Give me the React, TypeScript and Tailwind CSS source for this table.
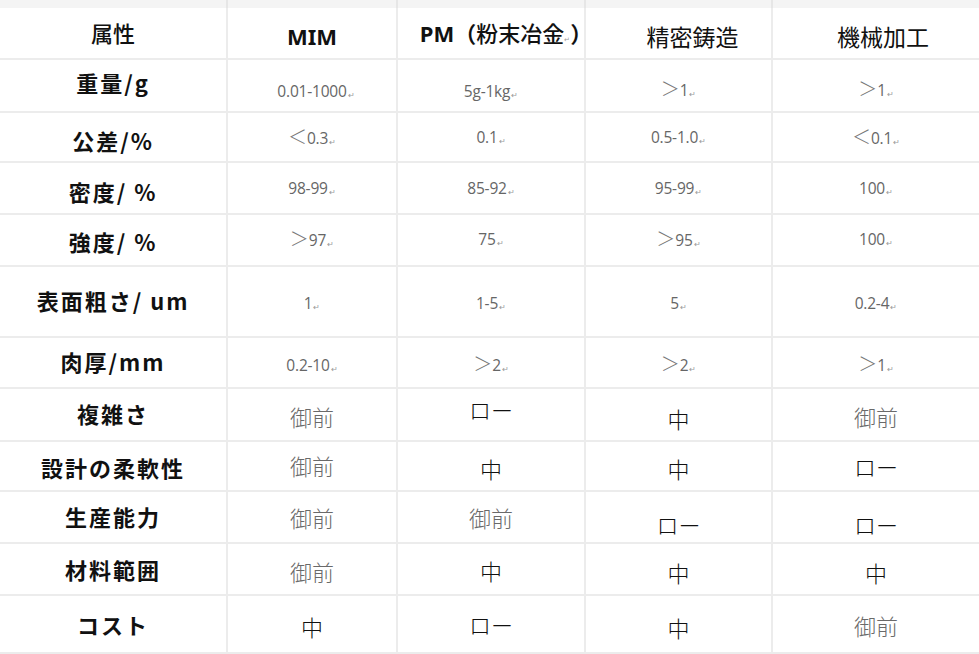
import React from "react";

type Cell = { t: string; k: "num" | "jp"; pre?: "gt" | "lt"; c?: string; gray?: boolean };

const JP = { fontFamily: '"Noto Sans CJK JP", "Noto Sans", sans-serif' };
const NUM = { fontFamily: '"Open Sans", "Noto Sans", sans-serif' };

const rows: { label: string; lc: string; h: string; cells: Cell[] }[] = [
  {
    label: "重量/g",
    lc: "pb-[6px]",
    h: "h-[53px]",
    cells: [
      { t: "0.01-1000", k: "num", c: "pt-[12px] pl-[8px]" },
      { t: "5g-1kg", k: "num", c: "pt-[12px]" },
      { t: "1", k: "num", pre: "gt", c: "pt-[10px]" },
      { t: "1", k: "num", pre: "gt", c: "pt-[10px]" },
    ],
  },
  {
    label: "公差/%",
    lc: "pt-[6px]",
    h: "h-[50px]",
    cells: [
      { t: "0.3", k: "num", pre: "lt", c: "pt-[2px]" },
      { t: "0.1", k: "num", c: "pt-[2px]" },
      { t: "0.5-1.0", k: "num", c: "pt-[2px]" },
      { t: "0.1", k: "num", pre: "lt", c: "pt-[2px]" },
    ],
  },
  {
    label: "密度/ %",
    lc: "pt-[6px]",
    h: "h-[52px]",
    cells: [
      { t: "98-99", k: "num", c: "pt-[2px]" },
      { t: "85-92", k: "num", c: "pt-[2px]" },
      { t: "95-99", k: "num", c: "pt-[2px]" },
      { t: "100", k: "num", c: "pt-[2px]" },
    ],
  },
  {
    label: "強度/ %",
    lc: "pt-[2px]",
    h: "h-[52px]",
    cells: [
      { t: "97", k: "num", pre: "gt", c: "pt-[0px]" },
      { t: "75", k: "num", c: "pt-[0px]" },
      { t: "95", k: "num", pre: "gt", c: "pt-[0px]" },
      { t: "100", k: "num", c: "pt-[0px]" },
    ],
  },
  {
    label: "表面粗さ/ um",
    lc: "pb-[2px]",
    h: "h-[71px]",
    cells: [
      { t: "1", k: "num", c: "pt-[4px]" },
      { t: "1-5", k: "num", c: "pt-[4px]" },
      { t: "5", k: "num", c: "pt-[4px]" },
      { t: "0.2-4", k: "num", c: "pt-[4px]" },
    ],
  },
  {
    label: "肉厚/mm",
    lc: "pb-[2px]",
    h: "h-[51px]",
    cells: [
      { t: "0.2-10", k: "num", c: "pt-[6px]" },
      { t: "2", k: "num", pre: "gt", c: "pt-[6px]" },
      { t: "2", k: "num", pre: "gt", c: "pt-[6px]" },
      { t: "1", k: "num", pre: "gt", c: "pt-[6px]" },
    ],
  },
  {
    label: "複雑さ",
    lc: "pb-[2px]",
    h: "h-[53px]",
    cells: [
      { t: "御前", k: "jp", gray: true, c: "pt-[4px]" },
      { t: "ロー", k: "jp", c: "pb-[10px]" },
      { t: "中", k: "jp", c: "pt-[8px]" },
      { t: "御前", k: "jp", gray: true, c: "pt-[4px]" },
    ],
  },
  {
    label: "設計の柔軟性",
    lc: "pt-[2px]",
    h: "h-[50px]",
    cells: [
      { t: "御前", k: "jp", gray: true, c: "pb-[2px]" },
      { t: "中", k: "jp", c: "pt-[4px]" },
      { t: "中", k: "jp", c: "pt-[4px]" },
      { t: "ロー", k: "jp", c: "pt-[0px]" },
    ],
  },
  {
    label: "生産能力",
    lc: "pb-[2px]",
    h: "h-[52px]",
    cells: [
      { t: "御前", k: "jp", gray: true, c: "pt-[0px]" },
      { t: "御前", k: "jp", gray: true, c: "pt-[0px]" },
      { t: "ロー", k: "jp", c: "pt-[14px]" },
      { t: "ロー", k: "jp", c: "pt-[14px]" },
    ],
  },
  {
    label: "材料範囲",
    lc: "pb-[0px]",
    h: "h-[52px]",
    cells: [
      { t: "御前", k: "jp", gray: true, c: "pt-[4px]" },
      { t: "中", k: "jp", c: "pt-[2px]" },
      { t: "中", k: "jp", c: "pt-[6px]" },
      { t: "中", k: "jp", c: "pt-[6px]" },
    ],
  },
  {
    label: "コスト",
    lc: "pt-[0px]",
    h: "h-[58px]",
    cells: [
      { t: "中", k: "jp", c: "pt-[4px]" },
      { t: "ロー", k: "jp", c: "pt-[0px]" },
      { t: "中", k: "jp", c: "pt-[6px]" },
      { t: "御前", k: "jp", gray: true, c: "pt-[2px]" },
    ],
  },
];

const colW = ["w-[228px]", "w-[170px]", "w-[188px]", "w-[187px]", "w-[206px]"];

function Ret() {
  return <span className="text-[8px] text-[#999] ml-[1px] relative top-[1px]">↵</span>;
}

function NumCell({ cell }: { cell: Cell }) {
  return (
    <span className="inline-flex items-baseline text-[15.5px] text-[#666]" style={NUM}>
      {cell.pre && (
        <span className="text-[19px] leading-none font-light text-[#777]" style={JP}>
          {cell.pre === "gt" ? "＞" : "＜"}
        </span>
      )}
      <span className="tracking-[-0.2px]">{cell.t}</span>
      <Ret />
    </span>
  );
}

function JpCell({ cell }: { cell: Cell }) {
  return (
    <span
      className={`text-[22px] font-light ${cell.gray ? "text-[#6a6a6a]" : "text-[#111]"}`}
      style={JP}
    >
      {cell.t}
    </span>
  );
}

export default function App() {
  const border = "border-r-2 border-b-2 border-[#ececec]";
  return (
    <div className="w-[979px] h-[654px] bg-white overflow-hidden">
      {/* top strip */}
      <div className="flex h-[8px] bg-[#f4f4f4]">
        {colW.map((w, i) => (
          <div key={i} className={`${w} h-full ${i < 4 ? "border-r-2 border-[#e6e6e6]" : ""}`} />
        ))}
      </div>
      {/* header */}
      <div className="flex h-[52px]">
        <div className={`${colW[0]} ${border} flex items-center justify-center pb-[2px]`}>
          <span className="text-[22px] font-medium text-[#111]" style={JP}>属性</span>
        </div>
        <div className={`${colW[1]} ${border} flex items-center justify-center pt-[6px]`}>
          <span className="text-[22px] font-bold text-[#111]" style={{ fontFamily: '"Noto Sans", sans-serif' }}>MIM</span>
        </div>
        <div className={`${colW[2]} ${border} flex items-center justify-center pl-[30px]`}>
          <span className="text-[22px] font-bold text-[#111] whitespace-nowrap" style={{ fontFamily: '"Noto Sans", "Noto Sans CJK JP", sans-serif' }}>
            PM（<span className="font-medium" style={JP}>粉末冶金</span><span className="text-[7px] text-[#999] font-normal">↵</span>）
          </span>
        </div>
        <div className={`${colW[3]} ${border} flex items-center justify-center pt-[6px] pl-[28px]`}>
          <span className="text-[23px] font-normal text-[#111]" style={JP}>精密鋳造</span>
        </div>
        <div className={`${colW[4]} border-b-2 border-[#ececec] flex items-center justify-center pt-[6px] pl-[14px]`}>
          <span className="text-[23px] font-normal text-[#111]" style={JP}>機械加工</span>
        </div>
      </div>
      {rows.map((r, ri) => (
        <div key={ri} className={`flex ${r.h}`}>
          <div className={`${colW[0]} ${border} flex items-center justify-center ${r.lc}`}>
            <span className="text-[22px] font-semibold text-[#111] whitespace-pre tracking-[2px]" style={JP}>{r.label}</span>
          </div>
          {r.cells.map((c, ci) => (
            <div
              key={ci}
              className={`${colW[ci + 1]} ${ci < 3 ? border : "border-b-2 border-[#ececec]"} flex items-center justify-center ${c.c ?? ""}`}
            >
              {c.k === "num" ? <NumCell cell={c} /> : <JpCell cell={c} />}
            </div>
          ))}
        </div>
      ))}
    </div>
  );
}
